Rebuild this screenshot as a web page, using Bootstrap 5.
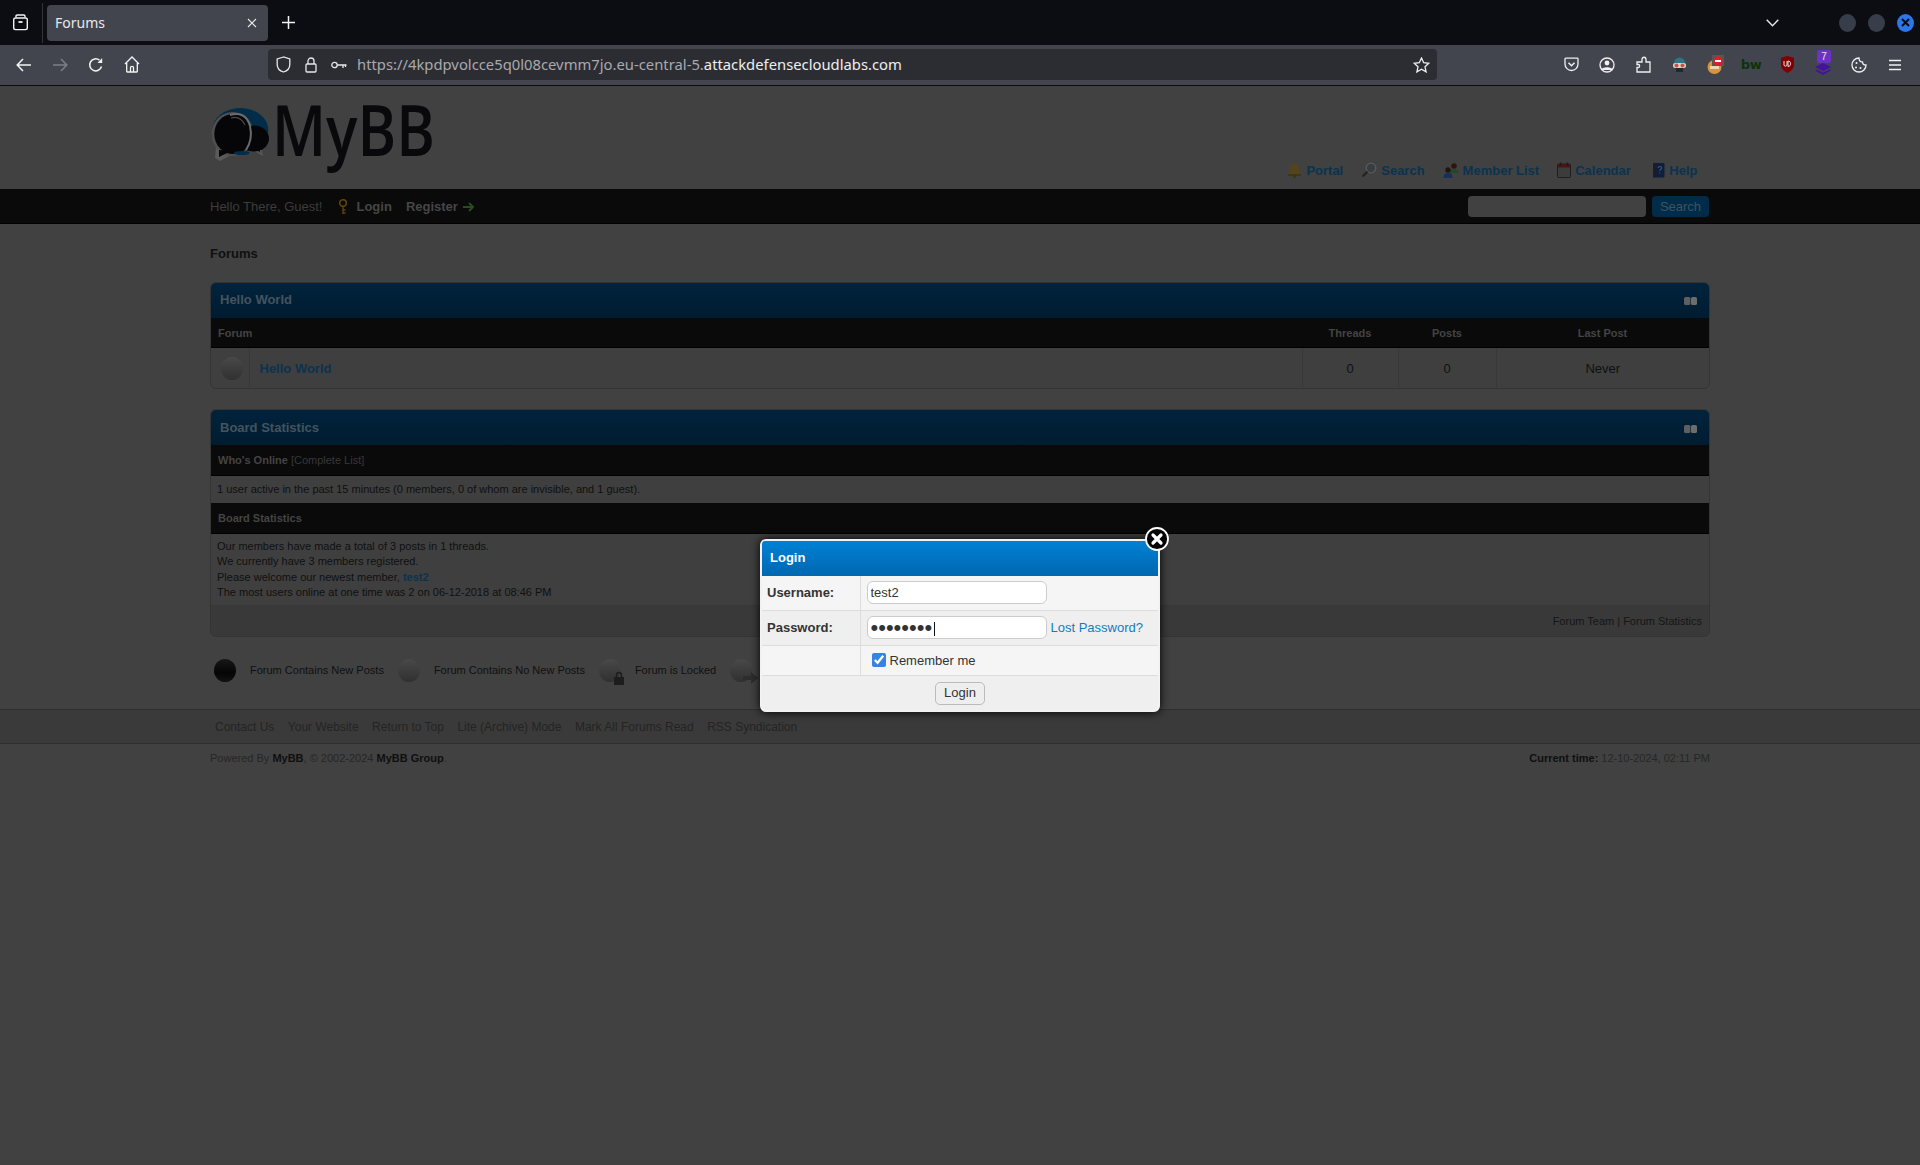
<!DOCTYPE html>
<html lang="en">
<head>
<meta charset="utf-8">
<title>Forums</title>
<link href="https://cdn.jsdelivr.net/npm/bootstrap@5.3.0/dist/css/bootstrap.min.css" rel="stylesheet">
<style>
html,body{height:100%;margin:0;overflow:hidden;}
body{background:#414141;font-family:"Liberation Sans",Arial,sans-serif;font-size:13px;color:#101010;}
svg{display:block;flex:none;}
/* browser chrome */
.tabbar{height:45px;background:#0c0d13;position:relative;padding-left:12px;}
.tabbar-sep{width:1px;height:40px;background:#33343a;margin:0 4px 0 13px;}
.tabitem{width:221px;height:36px;background:#42454e;border-radius:4px;color:#e8e8ea;font-family:"Noto Sans",sans-serif;font-size:14px;padding:0 11px 0 8px;}
.tabplus{margin-left:14px;}
.winbtn{width:17px;height:18px;border-radius:50%;background:#383d4a;}
.winbtn-x{background:#2a76ea;}
.wingroup{margin-left:60px;margin-right:6px;gap:12px;}
.toolbar{height:41px;background:#42454e;border-bottom:1px solid #0c0c0e;padding-bottom:1px;}
.toolgroup{margin-left:6px;}
.toolbtn{width:36px;height:36px;}
.urlbar{width:1169px;height:31px;background:#2c2d33;border-radius:4px;margin-left:118px;color:#a9a9ae;font-family:"Noto Sans",sans-serif;font-size:14.8px;padding:0 7px 0 6px;white-space:nowrap;}
.urlbar b{font-weight:400;color:#eeeef0;}
.urlslot{width:28px;height:31px;}
.urlslot-s{width:18px;margin-right:5px;}
.urlslot-k{margin-right:4px;}
.extgroup{margin-right:7px;}
.extslot{width:36px;height:31px;}
.extbw{font:700 13px "DejaVu Sans",sans-serif;color:#0a330c;letter-spacing:-.5px;}
.extbadge{top:1px;left:12px;width:14px;height:13px;background:#6a33c4;border-radius:2px;color:#e9e0f7;font:10px/13px "Liberation Sans",sans-serif;text-align:center;}
.extstack{margin-top:8px;}
.bbpage{position:relative;height:1079px;}
/* forum */
.wrap-w{width:1500px;}
.bbhead{height:103px;}
.logobox{margin-left:1px;}
.logobox svg{overflow:visible;}
.logotext{font-family:"Open Sans",sans-serif;font-weight:600;}
.bbnav{padding:0 12.500px 11px 0;gap:18px;line-height:15px;}
.bbnav a,.linkish{color:#0a3350;font-weight:700;text-decoration:none;}
.bbnav a{display:flex;align-items:center;gap:4px;}
.bbnav a:last-child{margin-left:3.500px;}
.bbpanel{height:35px;background:#0a0a0a;border-bottom:1px solid #000;color:#3c3c3c;}
.bbpanel a{color:#464646;font-weight:700;text-decoration:none;}
.panel-left{margin-top:1px;}
.panel-login{margin-left:16px;gap:8px;}
.panel-reg{margin-left:14px;gap:5px;}
.topform{margin-right:1px!important;}
.topinput{width:178px;height:21px;background:#414141;border:0;border-radius:4px;}
.topbtn{width:57px;height:21px;background:#002c4a;border:0;border-radius:4px;color:#40525e;font-size:13px;padding:0;line-height:21px;margin-left:6px;}
.crumb{height:58px;padding-top:22px;font-weight:700;line-height:16px;color:#101010;}
.bbbox{border:1px solid #343434;border-radius:6px;background:#3f3f3f;overflow:hidden;}
.bbbox-next{margin-top:20px;}
.bbtitle{height:35px;padding:0 9px 2px;background:linear-gradient(#00233c,#001c30);color:#44535e;font-weight:700;}
.bbbox-next .bbtitle{padding-bottom:0;}
.collapser{width:13px;height:8px;margin-right:3px;margin-top:2px;}
.bbthead{height:31px;background:#0a0a0a;border-bottom:1px solid #000;font-size:11px;padding:1px 7px 0;color:#383838;line-height:13px;}
.bbthead-b{padding-top:0;}
.bbthead b{color:#444;}
.bbtbl{table-layout:fixed;width:100%;border-collapse:collapse;margin:0;}
.bbtbl th{height:29px;background:#0a0a0a;border-bottom:1px solid #000;font-size:11px;font-weight:700;color:#444;padding:1px 7px 0;}
.bbtbl td{height:41px;padding:2px 10px 0;border-left:1px solid #383838;color:#101010;background:#3f3f3f;}
.bbtbl td:first-child{border-left:0;padding:2px 0 0 10px;}
.bbw1{width:38px;}.bbw3{width:96px;}.bbw4{width:98px;}.bbw5{width:213px;}
.bullet{width:22px;height:23px;border-radius:50%;background:linear-gradient(#494949,#303030);}
.bullet-on{background:linear-gradient(#171717,#050505 60%,#111);}
.line-small{font-size:11px;line-height:15.4px;padding:0 6px;color:#101010;}
.onlinerow{height:27px;padding-top:1px;}
.statsrow{height:72px;padding-top:5px;padding-bottom:4px;border-bottom:1px solid #383838;}
.boxfoot{height:30px;background:#393939;font-size:11px;color:#161616;padding:0 7px;}
.legendrow{height:72px;padding:0 0 6px 4px;font-size:11px;color:#101010;}
.legendrow .bullet{margin-right:14px;}
.legendrow .txt{margin-right:14px;}
.legend-lock{right:-4px;bottom:-3px;}
.legend-arrow{right:-6px;bottom:-2px;}
.footlinks{height:35px;background:#3a3a3a;border-top:1px solid #2f2f2f;border-bottom:1px solid #2f2f2f;font-size:12px;color:#242424;padding-top:1px;}
.footlinks .wrap-w{padding-left:5px;gap:13.500px;}
.footcopy{font-size:11px;color:#262626;height:28px;}
.footcopy b{color:#0f0f0f;}
/* modal */
.loginmodal{position:absolute;left:760px;top:453px;width:400px;height:173px;border:2px solid #f2f2f2;border-radius:6px;background:#f5f5f5;box-shadow:0 0 10px #000;color:#333;}
.loginhead{height:35px;background:linear-gradient(#0081d4,#0067b0);border-radius:3px 3px 0 0;color:#fff;font-weight:700;padding:0 8px 2px;}
.logintbl{width:100%;table-layout:fixed;border-collapse:collapse;margin:0;}
.logintbl td{height:35px;padding:0 5px;border-top:1px solid #ddd;background:#f5f5f5;}
.logintbl tr:first-child td{border-top:0;height:34px;}
.logintbl td:first-child{width:98px;border-right:1px solid #ddd;font-weight:700;}
.logintbl tr.alt td{background:#efefef;}
.logintbl td:last-child{padding-left:6px;}
.logintbl tr.chk td{height:30px;}
.logininput{width:180px;height:23px;border:1px solid #ccc;border-radius:6px;background:#fff;font-size:13px;color:#333;padding:0 3px;font-family:inherit;}
.logininput-pw{font-size:22px;line-height:21px;}
.pwd-caret{position:absolute;left:172px;top:81px;}
.lostlink{color:#0f7dc2;text-decoration:none;margin-left:4px;}
.remember{gap:4px;padding-left:5px;}
.remember input{width:14px;height:14px;margin:0;accent-color:#3584e4;}
.loginfoot{height:35px;background:#efefef;border-top:1px solid #ddd;border-radius:0 0 4px 4px;}
.loginbtn{width:50px;height:23px;background:#eee;border:1px solid #bbb;border-radius:5px;font-size:13px;color:#333;padding:0;line-height:20px;}
.closebtn{position:absolute;right:-11px;top:-14px;width:24px;height:24px;}
</style>
</head>
<body>
<div class="tabbar d-flex align-items-center">
  <svg width="17" height="17" viewBox="0 0 17 17" fill="none" stroke="#f2f2f2" stroke-width="1.4"><path d="M4 3.5V2.2C4 1.5 4.500 1 5.200 1H11.800C12.500 1 13 1.500 13 2.200V3.500"/><rect x="1.700" y="4" width="13.600" height="11.600" rx="1.800"/><path d="M6.500 8H10.500" stroke-width="1.800"/></svg>
  <div class="tabbar-sep"></div>
  <div class="tabitem d-flex align-items-center justify-content-between">
    <span>Forums</span>
    <svg width="10" height="10" viewBox="0 0 10 10" stroke="#e6e6e8" stroke-width="1.100"><path d="M1 1L9 9M9 1L1 9"/></svg>
  </div>
  <svg class="tabplus" width="13" height="13" viewBox="0 0 13 13" stroke="#f2f2f2" stroke-width="1.500"><path d="M6.500 0V13M0 6.500H13"/></svg>
  <div class="flex-grow-1"></div>
  <svg width="13" height="8" viewBox="0 0 13 8" fill="none" stroke="#e8e8e8" stroke-width="1.400"><path d="M.7.8L6.500 6.800L12.300.8"/></svg>
  <div class="wingroup d-flex align-items-center">
    <div class="winbtn"></div><div class="winbtn"></div>
    <div class="winbtn winbtn-x d-flex align-items-center justify-content-center"><svg width="9" height="9" viewBox="0 0 9 9" stroke="#0b0b10" stroke-width="2"><path d="M1 1L8 8M8 1L1 8"/></svg></div>
  </div>
</div>
<div class="toolbar d-flex align-items-center">
  <div class="toolgroup d-flex">
    <div class="toolbtn d-flex align-items-center justify-content-center"><svg width="16" height="14" viewBox="0 0 16 14" fill="none" stroke="#f4f4f4" stroke-width="1.500"><path d="M15 7H1.500M7 1L1.200 7L7 13"/></svg></div>
    <div class="toolbtn d-flex align-items-center justify-content-center"><svg width="16" height="14" viewBox="0 0 16 14" fill="none" stroke="#7d7f86" stroke-width="1.500"><path d="M1 7H14.500M9 1L14.800 7L9 13"/></svg></div>
    <div class="toolbtn d-flex align-items-center justify-content-center"><svg width="16" height="16" viewBox="0 0 16 16" fill="none" stroke="#f4f4f4" stroke-width="1.500"><path d="M13.500 9.500A6 6 0 1 1 11.500 3.200"/><path d="M14.200 1V6H9.500Z" fill="#f4f4f4" stroke="none"/></svg></div>
    <div class="toolbtn d-flex align-items-center justify-content-center"><svg width="16" height="17" viewBox="0 0 16 17" fill="none" stroke="#f4f4f4" stroke-width="1.300"><path d="M1 8L8 1L15 8M2.700 7V15.500C2.700 15.800 3 16 3.300 16H12.700C13 16 13.300 15.800 13.300 15.500V7"/><path d="M6.500 16V11.500C6.500 10.800 7.200 10.300 8 10.300S9.500 10.800 9.500 11.500V16"/></svg></div>
  </div>
  <div class="urlbar d-flex align-items-center">
    <div class="urlslot urlslot-s d-flex align-items-center justify-content-center"><svg width="15" height="17" viewBox="0 0 15 17" fill="none" stroke="#e8e8ea" stroke-width="1.300"><path d="M7.500 1L1.200 3V8.500C1.200 12 4 15 7.500 16C11 15 13.800 12 13.800 8.500V3Z"/></svg></div>
    <div class="urlslot d-flex align-items-center justify-content-center"><svg width="12" height="16" viewBox="0 0 12 16" fill="none" stroke="#e8e8ea" stroke-width="1.300"><rect x="1" y="7" width="10" height="8" rx="1"/><path d="M3 7V4A3 3 0 0 1 9 4V7"/></svg></div>
    <div class="urlslot urlslot-k d-flex align-items-center justify-content-center"><svg width="16" height="8" viewBox="0 0 16 8" fill="none" stroke="#e8e8ea" stroke-width="1.300"><circle cx="3.500" cy="4" r="2.700"/><path d="M6.200 4H15.500M12 4V7M14.500 4V6"/></svg></div>
    <span>https://4kpdpvolcce5q0l08cevmm7jo.eu-central-5.<b>attackdefensecloudlabs.com</b></span>
    <div class="flex-grow-1"></div>
    <svg width="17" height="16" viewBox="0 0 17 16" fill="none" stroke="#efeff1" stroke-width="1.300"><path d="M8.500 1L10.700 5.700L15.800 6.300L12 9.800L13.100 14.900L8.500 12.300L3.900 14.900L5 9.800L1.200 6.300L6.300 5.700Z"/></svg>
  </div>
  <div class="flex-grow-1"></div>
  <div class="extgroup d-flex align-items-center">
    <div class="extslot d-flex align-items-center justify-content-center"><svg width="15" height="15" viewBox="0 0 15 15" fill="none" stroke="#f0f0f2" stroke-width="1.300"><path d="M1.700 1.200H13.300C13.700 1.200 14 1.500 14 1.900V7A6.500 6.500 0 0 1 1 7V1.900C1 1.500 1.300 1.200 1.700 1.200Z"/><path d="M4.500 5.700L7.500 8.700L10.500 5.700" stroke-width="1.500"/></svg></div>
    <div class="extslot d-flex align-items-center justify-content-center"><svg width="16" height="16" viewBox="0 0 16 16" fill="none" stroke="#f0f0f2" stroke-width="1.300"><circle cx="8" cy="8" r="7"/><circle cx="8" cy="6" r="2.400" fill="#f0f0f2" stroke="none"/><path d="M3.500 12.300C4.500 10.300 11.500 10.300 12.500 12.300Z" fill="#f0f0f2"/></svg></div>
    <div class="extslot d-flex align-items-center justify-content-center"><svg width="15" height="17" viewBox="0 0 15 17" fill="none" stroke="#f0f0f2" stroke-width="1.300"><path d="M1 16V11.500H2.500C4 11.500 4 8.500 2.500 8.500H1V6H6V3.500C6 .5 10 .5 10 3.500V6H14V16Z"/></svg></div>
    <div class="extslot d-flex align-items-center justify-content-center"><svg width="15" height="17" viewBox="0 0 15 17"><path d="M2 7A5.500 5.500 0 0 1 13 7Z" fill="#2d7489"/><rect x="1" y="7" width="13" height="5" rx="2" fill="#d9d2c8"/><circle cx="4.500" cy="9.500" r="2" fill="#d0503f"/><circle cx="10.500" cy="9.500" r="2" fill="#d0503f"/><path d="M4 12H11V16H4Z" fill="#23282c"/></svg></div>
    <div class="extslot d-flex align-items-center justify-content-center"><svg width="17" height="20" viewBox="0 0 17 20"><circle cx="7.500" cy="12" r="7" fill="#d8933f"/><path d="M3 11H12V14H3Z" fill="#e9d7b8"/><rect x="5" y="0" width="12" height="11" fill="#565656"/><circle cx="11" cy="6" r="4.700" fill="#d8202a"/><rect x="8" y="5" width="6" height="2" fill="#fff"/></svg></div>
    <div class="extslot d-flex align-items-center justify-content-center"><span class="extbw">bw</span></div>
    <div class="extslot d-flex align-items-center justify-content-center"><svg width="15" height="17" viewBox="0 0 15 17"><path d="M7.500 0L1 1.800V8.500C1 12.500 4 15.500 7.500 17C11 15.500 14 12.500 14 8.500V1.800Z" fill="#800000"/><path d="M4 5V9C4 10.500 7 10.500 7 9V5M8 5V10.500C11.500 10.500 11.500 5 8 5Z" fill="none" stroke="#f0e0e0"/></svg></div>
    <div class="extslot d-flex align-items-center justify-content-center position-relative"><svg class="extstack" width="16" height="12" viewBox="0 0 16 12"><path d="M8 0L16 4L8 8L0 4ZM1.500 6.500L8 9.800L14.500 6.500L16 7.500L8 12L0 7.500Z" fill="#43129f"/></svg><span class="extbadge position-absolute">7</span></div>
    <div class="extslot d-flex align-items-center justify-content-center"><svg width="16" height="16" viewBox="0 0 16 16" fill="none" stroke="#f0f0f2" stroke-width="1.300"><path d="M8 1A7 7 0 1 0 15 8C12.800 8 11.500 7 11.500 5C9.500 5 8 3.500 8 1Z"/><circle cx="5.500" cy="6" r="1" fill="#f0f0f2" stroke="none"/><circle cx="5" cy="10.500" r="1" fill="#f0f0f2" stroke="none"/><circle cx="9.500" cy="11" r="1" fill="#f0f0f2" stroke="none"/></svg></div>
    <div class="extslot d-flex align-items-center justify-content-center"><svg width="14" height="12" viewBox="0 0 14 12" stroke="#f0f0f2" stroke-width="1.400"><path d="M1 1.500H13M1 6H13M1 10.500H13"/></svg></div>
  </div>
</div>

<div class="bbpage">
  <div class="bbhead">
    <div class="wrap-w mx-auto d-flex justify-content-between align-items-end h-100">
      <div class="logobox d-flex align-self-start">
        <svg width="226" height="92" viewBox="0 -20 226 92" role="img" aria-label="MyBB">
          <ellipse cx="29.300" cy="24" rx="28" ry="22" fill="#012d4a"/>
          <path d="M5 40L4 52L9 55L24 47Z" fill="#5a5a5a"/>
          <path d="M40 43L52 50L49 38Z" fill="#5a5a5a"/>
          <ellipse cx="21.500" cy="28" rx="21" ry="22" fill="#4f4f4f"/>
          <ellipse cx="43" cy="32.500" rx="15" ry="13" fill="#060608"/>
          <ellipse cx="22.300" cy="28" rx="19" ry="20" fill="#060608"/>
          <path d="M8 44L8 51L20 45Z" fill="#060608"/>
          <path d="M44 42L49.500 47L47 40Z" fill="#060608"/>
          <path d="M19 9C28 6 36 9 39 20C41 29 39 38 35 44" fill="none" stroke="#6b6b6b" stroke-width="2"/>
          <path d="M20 12C26 10 31 13 34 19" fill="none" stroke="#4a4a4a" stroke-width="1.200"/>
          <ellipse cx="30.700" cy="47" rx="8" ry="2" fill="#012d4a"/>
          <text x="61" y="50" textLength="163" lengthAdjust="spacingAndGlyphs" class="logotext" font-size="70" fill="#09090b">MyBB</text>
        </svg>
      </div>
      <nav class="bbnav d-flex align-items-center">
        <a href="#"><svg width="15" height="16" viewBox="0 0 15 16"><path d="M7.500 1C5 1 3.500 3 3.500 6C3.500 9 2.500 11 1 12.500V13.500H14V12.500C12.500 11 11.500 9 11.500 6C11.500 3 10 1 7.500 1Z" fill="#54441a"/><path d="M1 12.500V13.500H14V12.500Z" fill="#2e2a16"/><circle cx="7.500" cy="14.500" r="1.500" fill="#3f3312"/></svg>Portal</a>
        <a href="#"><svg width="16" height="16" viewBox="0 0 16 16" fill="none"><circle cx="10" cy="6" r="4.800" stroke="#5a5a5a" stroke-width="1.300" fill="#3a3d40"/><path d="M6.500 9.500L1.500 14.500" stroke="#22221d" stroke-width="2.200"/></svg>Search</a>
        <a href="#"><svg width="16" height="16" viewBox="0 0 16 16"><circle cx="11" cy="4" r="2.800" fill="#2c170f"/><path d="M7 11C7 8 8.500 7 11 7S15.500 8 15.500 11Z" fill="#1e4a26"/><circle cx="5" cy="8" r="2.700" fill="#21160f"/><path d="M0.500 16C0.500 12 2 11 5 11S9.500 12 9.500 16Z" fill="#182f5c"/></svg>Member List</a>
        <a href="#"><svg width="14" height="16" viewBox="0 0 14 16"><rect x=".5" y="2" width="13" height="13.500" rx="1" fill="#3c3c3c" stroke="#1f1f1f"/><rect x="1" y="2" width="12" height="3.500" fill="#4a1414"/><path d="M3.500 .5V3.500M10.500 .5V3.500" stroke="#1a1a1a" stroke-width="1.200"/></svg>Calendar</a>
        <a href="#"><svg width="13" height="16" viewBox="0 0 13 16"><rect x="1" y="1" width="11.500" height="14.500" rx="1" fill="#0f1e3c"/><rect x="1" y="1" width="2.500" height="14.500" fill="#1b1e24"/><path d="M6 6C6 4 9.500 4 9.500 6C9.500 7.500 7.700 7.500 7.700 9M7.700 10.500V11.500" fill="none" stroke="#445472" stroke-width="1.100"/></svg>Help</a>
      </nav>
    </div>
  </div>

  <div class="bbpanel">
    <div class="wrap-w mx-auto h-100 d-flex align-items-center justify-content-between">
      <div class="panel-left d-flex align-items-center">
        <span>Hello There, Guest!</span>
        <a href="#" class="panel-login d-flex align-items-center"><svg width="10" height="16" viewBox="0 0 10 16" fill="none"><circle cx="5" cy="4" r="3.300" stroke="#5e4409" stroke-width="1.600"/><path d="M5 7V15M5 11H7.500M5 14H7.500" stroke="#5e4409" stroke-width="1.400"/></svg>Login</a>
        <a href="#" class="panel-reg d-flex align-items-center">Register<svg width="11" height="10" viewBox="0 0 11 10" fill="none" stroke="#2a4a1f" stroke-width="2"><path d="M0 5H9.500M6 1L10 5L6 9"/></svg></a>
      </div>
      <form class="topform d-flex align-items-center m-0" onsubmit="return false">
        <input class="topinput" type="text" aria-label="Search"><button class="topbtn" type="button">Search</button>
      </form>
    </div>
  </div>

  <div class="wrap-w mx-auto">
    <div class="crumb">Forums</div>

    <section class="bbbox">
      <div class="bbtitle d-flex align-items-center justify-content-between">
        <span>Hello World</span>
        <svg class="collapser" viewBox="0 0 13 8"><rect width="6.400" height="8" rx="1.500" fill="#5f5f5f"/><rect x="7" width="6" height="8" rx="1.500" fill="#6d6d6d"/></svg>
      </div>
      <table class="bbtbl">
        <colgroup><col class="bbw1"><col><col class="bbw3"><col class="bbw4"><col class="bbw5"></colgroup>
        <thead><tr><th colspan="2">Forum</th><th class="text-center">Threads</th><th class="text-center">Posts</th><th class="text-center">Last Post</th></tr></thead>
        <tbody><tr>
          <td><div class="bullet"></div></td>
          <td><a href="#" class="linkish">Hello World</a></td>
          <td class="text-center">0</td><td class="text-center">0</td><td class="text-center">Never</td>
        </tr></tbody>
      </table>
    </section>

    <section class="bbbox bbbox-next">
      <div class="bbtitle d-flex align-items-center justify-content-between">
        <span>Board Statistics</span>
        <svg class="collapser" viewBox="0 0 13 8"><rect width="6.400" height="8" rx="1.500" fill="#5f5f5f"/><rect x="7" width="6" height="8" rx="1.500" fill="#6d6d6d"/></svg>
      </div>
      <div class="bbthead d-flex align-items-center"><span><b>Who's Online</b> [Complete List]</span></div>
      <div class="line-small onlinerow d-flex align-items-center">1 user active in the past 15 minutes (0 members, 0 of whom are invisible, and 1 guest).</div>
      <div class="bbthead bbthead-b d-flex align-items-center"><b>Board Statistics</b></div>
      <div class="line-small statsrow">
        Our members have made a total of 3 posts in 1 threads.<br>
        We currently have 3 members registered.<br>
        Please welcome our newest member, <a href="#" class="linkish">test2</a><br>
        The most users online at one time was 2 on 06-12-2018 at 08:46 PM
      </div>
      <div class="boxfoot d-flex align-items-center justify-content-end">Forum Team | Forum Statistics</div>
    </section>

    <div class="legendrow d-flex align-items-center">
      <div class="bullet bullet-on"></div><span class="txt">Forum Contains New Posts</span>
      <div class="bullet"></div><span class="txt">Forum Contains No New Posts</span>
      <div class="bullet position-relative"><svg class="legend-lock position-absolute" width="12" height="14" viewBox="0 0 12 14"><path d="M3.500 6V4A2.500 2.500 0 0 1 8.500 4V6" fill="none" stroke="#1d1d1d" stroke-width="1.500"/><rect x="1" y="6" width="10" height="8" fill="#1d1d1d"/></svg></div><span class="txt">Forum is Locked</span>
      <div class="bullet position-relative"><svg class="legend-arrow position-absolute" width="15" height="12" viewBox="0 0 15 12"><path d="M0 4H8V0L15 6L8 12V8H0Z" fill="#2d2d2d"/></svg></div><span class="txt">Forum is a Redirect</span>
    </div>
  </div>

  <div class="footlinks">
    <div class="wrap-w mx-auto h-100 d-flex align-items-center">
      <span>Contact Us</span><span>Your Website</span><span>Return to Top</span><span>Lite (Archive) Mode</span><span>Mark All Forums Read</span><span>RSS Syndication</span>
    </div>
  </div>
  <div class="wrap-w mx-auto footcopy d-flex align-items-center justify-content-between">
    <span>Powered By <b>MyBB</b>, © 2002-2024 <b>MyBB Group</b>.</span>
    <span><b>Current time:</b> 12-10-2024, 02:11 PM</span>
  </div>

  <div class="loginmodal">
    <svg class="closebtn" viewBox="0 0 24 24"><circle cx="12" cy="12" r="11" fill="#050505" stroke="#fff" stroke-width="1.800"/><path d="M8 8L16 16M16 8L8 16" stroke="#fff" stroke-width="3.200" stroke-linecap="round"/></svg>
    <div class="loginhead d-flex align-items-center">Login</div>
    <table class="logintbl">
      <tbody>
        <tr><td>Username:</td><td><input class="logininput d-block" type="text" value="test2" aria-label="Username"></td></tr>
        <tr class="alt"><td>Password:</td><td><div class="d-flex align-items-center"><input class="logininput logininput-pw" type="password" value="password" aria-label="Password"><a href="#" class="lostlink">Lost Password?</a></div></td></tr>
        <tr class="chk"><td></td><td><label class="remember d-flex align-items-center"><input type="checkbox" checked> Remember me</label></td></tr>
      </tbody>
    </table>
    <div class="loginfoot d-flex align-items-center justify-content-center"><button class="loginbtn" type="button">Login</button></div>
    <svg class="pwd-caret" width="1" height="14"><rect width="1" height="14" fill="#111"/></svg>
  </div>
</div>
</body>
</html>
